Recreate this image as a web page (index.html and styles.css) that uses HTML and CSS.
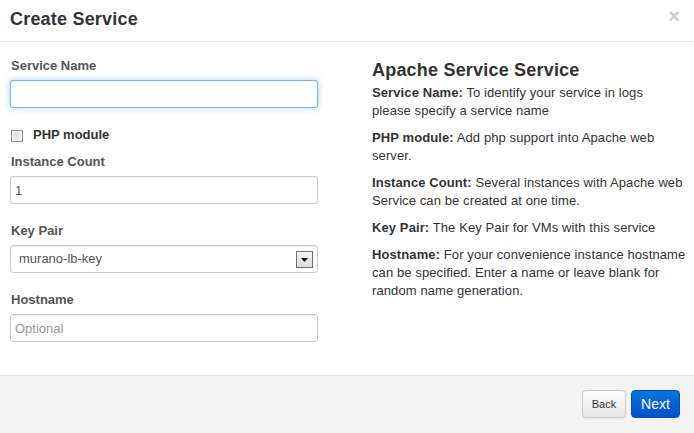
FILE: index.html
```html
<!DOCTYPE html>
<html>
<head>
<meta charset="utf-8">
<title>Create Service</title>
<link rel="stylesheet" href="styles.css">
</head>
<body>
<div class="modal">
  <div class="modal-header">
    <h3 class="modal-title">Create Service</h3>
    <span class="close">&times;</span>
  </div>
  <div class="modal-body">
    <form class="form-col">
      <label class="field-label">Service Name</label>
      <input class="text-input is-focused" type="text">

      <label class="check-row"><input type="checkbox" class="check"><span>PHP module</span></label>

      <label class="field-label">Instance Count</label>
      <input class="text-input" type="text" value="1">

      <label class="field-label spaced">Key Pair</label>
      <div class="select-wrap">
        <select class="select-input"><option>murano-lb-key</option></select>
        <span class="select-arrow">
          <svg width="7" height="4" viewBox="0 0 7 4"><path d="M0 0H7L3.5 4Z" fill="#000"/></svg>
        </span>
      </div>

      <label class="field-label spaced">Hostname</label>
      <input class="text-input" type="text" placeholder="Optional">
    </form>
    <div class="help-col">
      <h3 class="help-title">Apache Service Service</h3>
      <p><strong>Service Name:</strong> To identify your service in logs<br>please specify a service name</p>
      <p><strong>PHP module:</strong> Add php support into Apache web server.</p>
      <p><strong>Instance Count:</strong> Several instances with Apache web Service can be created at one time.</p>
      <p><strong>Key Pair:</strong> The Key Pair for VMs with this service</p>
      <p><strong>Hostname:</strong> For your convenience instance hostname can be specified. Enter a name or leave blank for random name generation.</p>
    </div>
  </div>
  <div class="modal-footer">
    <button class="btn btn-back" type="button">Back</button>
    <button class="btn btn-next" type="button">Next</button>
  </div>
</div>
</body>
</html>
```

FILE: styles.css
```css
* { box-sizing: border-box; }

html, body {
  margin: 0;
  padding: 0;
  background: #fff;
}

body {
  font-family: "Liberation Sans", Arial, Helvetica, sans-serif;
  font-size: 13px;
  line-height: 18px;
  color: #333;
  height: 433px;
  overflow: hidden;
}

.modal {
  width: 694px;
  display: flex;
  flex-direction: column;
  min-height: 433px;
}

.modal-header {
  display: flex;
  justify-content: space-between;
  align-items: flex-start;
  padding: 6px 14px 8px 10px;
  border-bottom: 1px solid #e5e5e5;
  height: 42px;
}

.modal-title {
  margin: 0;
  font-size: 18px;
  line-height: 27px;
  font-weight: bold;
  color: #333;
  letter-spacing: 0.2px;
}

.close {
  font-size: 20px;
  font-weight: bold;
  line-height: 18px;
  color: #000;
  opacity: 0.2;
  margin-top: 1px;
}

.modal-body {
  display: flex;
  gap: 54px;
  padding: 15px 0 33px 10px;
}

.form-col {
  width: 308px;
  flex: none;
  display: flex;
  flex-direction: column;
  margin: 0;
}

.field-label {
  display: block;
  font-weight: bold;
  color: #555;
  margin-bottom: 5px;
  padding-left: 1px;
}

.field-label.spaced {
  margin-top: 18px;
}

.text-input,
.select-input {
  width: 308px;
  height: 28px;
  padding: 4px;
  font-family: "Liberation Sans", Arial, Helvetica, sans-serif;
  font-size: 13px;
  line-height: 18px;
  color: #555;
  background: #fff;
  border: 1px solid #ccc;
  border-radius: 3px;
  box-shadow: inset 0 1px 1px rgba(0, 0, 0, 0.075);
  outline: none;
  margin: 0;
}

.text-input::placeholder {
  color: #999;
}

.text-input.is-focused {
  border-color: rgba(82, 168, 236, 0.8);
  box-shadow: inset 0 1px 1px rgba(0, 0, 0, 0.075), 0 0 6px rgba(82, 168, 236, 0.5);
}

.check-row {
  display: flex;
  align-items: center;
  height: 18px;
  margin: 18px 0 9px 0;
  font-weight: bold;
  color: #333;
}

.check {
  appearance: none;
  -webkit-appearance: none;
  width: 12px;
  height: 12px;
  margin: 1px 10px 0 1px;
  border: 1px solid #8e8f8f;
  background: linear-gradient(135deg, #dcdcdc, #f6f6f6);
  box-shadow: inset 0 0 0 1px #fff;
}

.select-wrap {
  position: relative;
  width: 308px;
}

.select-input {
  appearance: none;
  -webkit-appearance: none;
  padding: 4px 30px 4px 8px;
  display: block;
}

.select-arrow {
  position: absolute;
  right: 5px;
  top: 6px;
  width: 17px;
  height: 17px;
  border: 1px solid #707070;
  background: linear-gradient(#f4f4f4, #dcdcdc);
  display: flex;
  align-items: center;
  justify-content: center;
  pointer-events: none;
}

.help-col {
  width: 320px;
  flex: none;
}

.help-title {
  margin: 0;
  font-size: 18px;
  line-height: 27px;
  font-weight: bold;
  color: #333;
  letter-spacing: 0.2px;
}

.help-col p {
  margin: 0 0 9px 0;
  letter-spacing: 0.1px;
}

.help-col strong {
  font-weight: bold;
}

.modal-footer {
  flex: 1;
  display: flex;
  justify-content: flex-end;
  align-items: flex-start;
  gap: 5px;
  padding: 14px 14px 0 0;
  background: #f3f3f3;
  border-top: 1px solid #ddd;
}

.btn {
  height: 28px;
  border-radius: 4px;
  font-family: "Liberation Sans", Arial, Helvetica, sans-serif;
  cursor: pointer;
  margin: 0;
}

.btn-back {
  width: 44px;
  padding: 0;
  font-size: 11px;
  color: #333;
  background: linear-gradient(#ffffff, #e6e6e6);
  border: 1px solid #c8c8c8;
  box-shadow: inset 0 1px 0 rgba(255, 255, 255, 0.2), 0 1px 2px rgba(0, 0, 0, 0.05);
}

.btn-next {
  width: 49px;
  padding: 0;
  font-size: 14px;
  color: #fff;
  background: linear-gradient(#0a74d9, #0050c6);
  border: 1px solid #0050b8;
}
```
